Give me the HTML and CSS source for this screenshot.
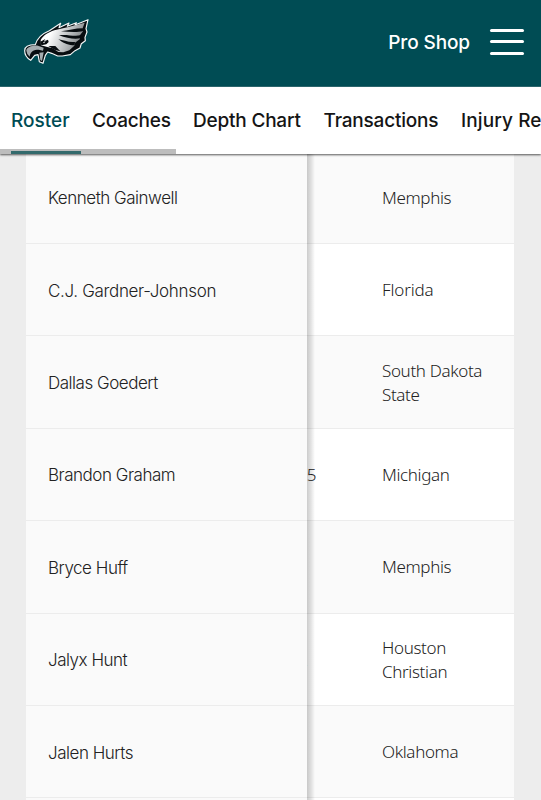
FILE: index.html
```
<!DOCTYPE html>
<html lang="en">
<head>
<meta charset="utf-8">
<title>Eagles Roster</title>
<link rel="stylesheet" href="styles.css">
</head>
<body>
<header class="topbar">
  <svg class="logo" viewBox="27 27 198 138" width="66" height="46" role="img" aria-label="Philadelphia Eagles">
    <defs>
      <linearGradient id="feather" x1="0" y1="0" x2="1" y2="0.3">
        <stop offset=".3" stop-color="#fff"/>
        <stop offset=".75" stop-color="#b4b8ba"/>
        <stop offset="1" stop-color="#85898b"/>
      </linearGradient>
    </defs>
    <path d="M29 122C29 110 42 104 61 104C66 86 83 70 103 62L137 40L132 53L162 39L157 49L184 38L180 45L219 29L213 56L216 66L210 82L211 92L199 101L195 114L180 122L166 134L142 138L128 138L110 130L98 126L91 136L84 160L73 155L69 134L59 136L47 151C36 144 29 134 29 122Z" fill="#080d10" stroke="#f4f7f7" stroke-width="3.5" stroke-linejoin="round"/>
    <path d="M77 90C85 76 100 67 118 61L160 51L209 38L202 57L204 64L193 78L195 87L180 98L178 107L163 121L145 127L130 126L113 115L97 111L78 106Z" fill="url(#feather)"/>
    <path d="M203 55C182 55 158 62 138 64C164 66 187 68 205 63ZM196 76C176 80 153 72 132 76C154 84 178 89 196 85ZM180 96C160 98 145 90 130 88C144 98 160 108 179 105Z" fill="#080d10"/>
    <path d="M76 95L91 87L87 94L99 89L101 96L94 103L79 106ZM100 108L121 108L136 124L119 119Z" fill="#080d10"/>
    <path d="M34 122C34 112 52 105 69 107L86 113L84 122L71 119C56 119 46 124 44 140Q35 133 34 122ZM73 128L86 127L81 153L76 150Z" fill="#a5acaf"/>
    <path d="M84 97L92 94L87 100Z" fill="#f5f7f8"/>
  </svg>
  <nav class="top-actions">
    <span class="shop">Pro Shop</span>
    <span class="burger"><i></i><i></i><i></i></span>
  </nav>
</header>
<nav class="tabs">
  <span class="tab roster-tab active">Roster</span>
  <span class="tab coaches-tab">Coaches</span>
  <span class="tab depth-tab">Depth Chart</span>
  <span class="tab transactions-tab">Transactions</span>
  <span class="tab injury-tab">Injury Report</span>
  <span class="scrollbar"></span>
</nav>
<main class="roster">
  <div class="row"><div class="name">Kenneth Gainwell</div><div class="exp"></div><div class="college">Memphis</div></div>
  <div class="row"><div class="name loose">C.J. Gardner-Johnson</div><div class="exp"></div><div class="college loose">Florida</div></div>
  <div class="row"><div class="name">Dallas Goedert</div><div class="exp"></div><div class="college">South Dakota State</div></div>
  <div class="row"><div class="name">Brandon Graham</div><div class="exp">15</div><div class="college">Michigan</div></div>
  <div class="row"><div class="name">Bryce Huff</div><div class="exp"></div><div class="college">Memphis</div></div>
  <div class="row"><div class="name">Jalyx Hunt</div><div class="exp">R</div><div class="college">Houston Christian</div></div>
  <div class="row"><div class="name">Jalen Hurts</div><div class="exp"></div><div class="college">Oklahoma</div></div>
  <div class="row"><div class="name"></div><div class="exp"></div><div class="college"></div></div>
</main>
</body>
</html>
```
FILE: styles.css
```
* { box-sizing: border-box; }
html { overflow: hidden; }
body { margin: 0; height: 800px; overflow: hidden; background: #ededed; font-family: Inter, "Liberation Sans", sans-serif; color: #222; }
.topbar { height: 87px; background: #004c54; border-bottom: 1px solid #2e6b72; display: flex; align-items: flex-start; justify-content: space-between; padding: 19px 17px 0 24px; }
.logo { display: block; }
.top-actions { display: flex; gap: 20px; color: #fff; }
.shop { font-size: 19px; font-weight: 500; line-height: 24px; margin-top: 12px; letter-spacing: -.1px; }
.burger { display: flex; flex-direction: column; gap: 8.4px; width: 34px; margin-top: 10px; }
.burger i { height: 3px; border-radius: 1.5px; background: #fff; }
.tabs { position: relative; z-index: 3; height: 67px; background: #fff; display: flex; padding-left: 11px; white-space: nowrap; box-shadow: 0 1px 2px rgba(0,0,0,.65); }
.tab { position: relative; flex: none; font-size: 19px; font-weight: 500; line-height: 24px; padding-top: 22px; color: #151515; letter-spacing: -.2px; }
.roster-tab { width: 81px; letter-spacing: 0; }
.coaches-tab { width: 101px; }
.depth-tab { width: 130.5px; }
.transactions-tab { width: 137.5px; }
.injury-tab { width: 80px; overflow: hidden; letter-spacing: .1px; }
.active { color: #004c54; }
.active::after { content: ""; position: absolute; z-index: 2; left: 0; width: 70px; bottom: 0; height: 3px; background: #336a6c; }
.scrollbar { position: absolute; left: 0; bottom: 0; width: 176px; height: 5px; background: #bdbdbd; }
.roster { height: 649px; overflow: hidden; margin: -3px 27px 0 26px; }
.row { height: 92.4px; display: grid; grid-template-columns: 281px 52px 155px; grid-template-rows: 100%; border-bottom: 1.5px solid #ececec; background: #fff; font-size: 17px; font-weight: 300; line-height: 24px; align-items: center; letter-spacing: -.35px; }
.row:nth-child(odd) { background: #fafafa; }
.name { position: relative; z-index: 1; height: 100%; display: flex; align-items: center; padding: 2px 0 0 22px; background: #fafafa; white-space: nowrap; letter-spacing: -.48px; }
.name.loose { letter-spacing: -.33px; }
.name::after { content: ""; position: absolute; top: 0; left: 100%; width: 8px; height: calc(100% + 1px); background: linear-gradient(to right, rgba(0,0,0,.2), rgba(0,0,0,.11) 50%, rgba(0,0,0,0)); }
.exp { font-family: "Noto Sans", sans-serif; margin-left: -10px; padding-top: 1px; letter-spacing: 0; }
.college { font-family: "Noto Sans", sans-serif; padding: 1px 22px 0 23px; }
.college.loose { letter-spacing: -.15px; }
.roster .row:first-child { height: 93px; }
```
